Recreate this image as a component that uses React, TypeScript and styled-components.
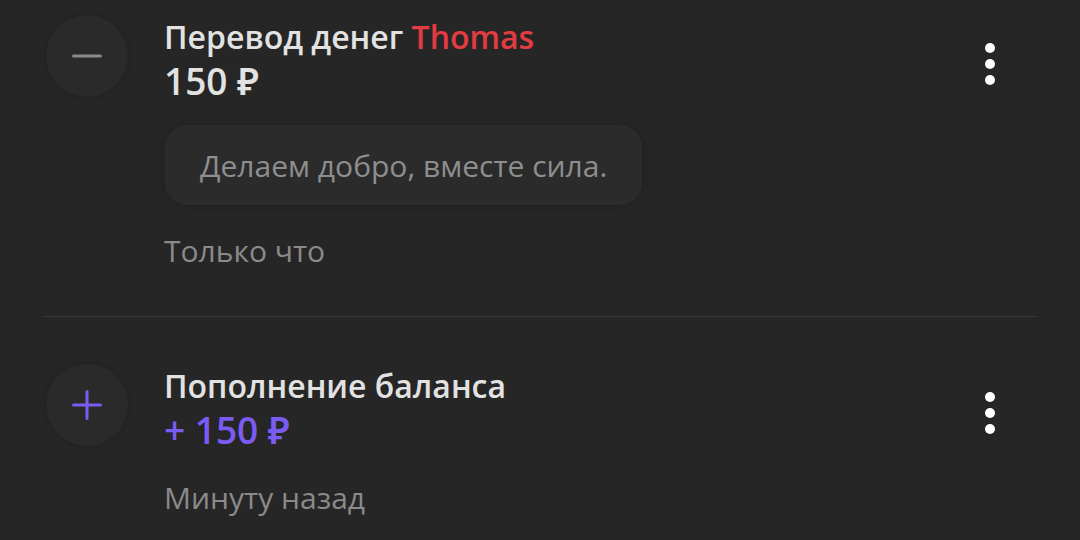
import styled, { createGlobalStyle } from 'styled-components';

const GlobalStyle = createGlobalStyle`
    html, body {
        margin: 0;
        background-color: #262626;
        font-family: "Open Sans", "Noto Sans", sans-serif;
        overflow: hidden;
    }
`;

const Feed = styled.div`
    width: 1080px;
    height: 540px;
    overflow: hidden;
`;

const List = styled.div`
    margin-top: -32px;
`;

const Item = styled.div<{ $last?: boolean }>`
    margin: 0 44px;
    padding: 47px 0 45px;
    border-bottom: ${(p) => (p.$last ? 'none' : '1px solid #383838')};
`;

const Head = styled.div`
    display: flex;
    align-items: flex-start;
`;

const IconCircle = styled.div`
    width: 82px;
    height: 82px;
    margin-left: 2px;
    border-radius: 50%;
    background-color: #2a2a2a;
    box-shadow: 0 0 6px rgba(0, 0, 0, 0.15);
    display: flex;
    align-items: center;
    justify-content: center;
    flex-shrink: 0;
`;

const Body = styled.div`
    flex: 1;
    margin-left: 36px;
`;

const Title = styled.div`
    font-size: 32px;
    font-weight: 600;
    line-height: 44px;
    color: #e2e2e2;
`;

const Name = styled.span`
    color: #e23b41;
`;

const Amount = styled.div<{ $income?: boolean }>`
    font-size: 37px;
    font-weight: 600;
    line-height: 44px;
    color: ${(p) => (p.$income ? '#7b5cf2' : '#e2e2e2')};
`;

const Menu = styled.button`
    background: none;
    border: none;
    padding: 0;
    margin: 28px 41px 0 0;
    display: flex;
    flex-direction: column;
    gap: 6px;
`;

const Dot = styled.span`
    width: 10px;
    height: 10px;
    border-radius: 50%;
    background-color: #ffffff;
`;

const Bubble = styled.div`
    display: inline-flex;
    align-items: center;
    height: 80px;
    margin: 22px 0 0 121px;
    padding: 0 35px;
    border-radius: 22px;
    background-color: #2b2b2b;
    box-shadow: 0 0 10px rgba(0, 0, 0, 0.18);
    font-size: 30px;
    color: #8e8e8e;
`;

const Time = styled.div`
    margin: 26px 0 0 120px;
    font-size: 30px;
    line-height: 40px;
    color: #8a8a8a;
`;

function Dots() {
    return (
        <Menu>
            <Dot />
            <Dot />
            <Dot />
        </Menu>
    );
}

function Minus() {
    return (
        <svg width="30" height="4" viewBox="0 0 30 4">
            <rect x="0" y="0.5" width="30" height="3" rx="1.5" fill="#8a8a8a" />
        </svg>
    );
}

function Plus() {
    return (
        <svg width="30" height="30" viewBox="0 0 30 30">
            <rect x="0" y="13.5" width="30" height="3" rx="1.5" fill="#7b5cf2" />
            <rect x="13.5" y="0" width="3" height="30" rx="1.5" fill="#7b5cf2" />
        </svg>
    );
}

export default function App() {
    return (
        <>
            <GlobalStyle />
            <Feed>
                <List>
                    <Item>
                        <Head>
                            <IconCircle>
                                <Minus />
                            </IconCircle>
                            <Body>
                                <Title>
                                    Перевод денег <Name>Thomas</Name>
                                </Title>
                                <Amount>150 ₽</Amount>
                            </Body>
                            <Dots />
                        </Head>
                        <Bubble>Делаем добро, вместе сила.</Bubble>
                        <Time>Только что</Time>
                    </Item>
                    <Item $last>
                        <Head>
                            <IconCircle>
                                <Plus />
                            </IconCircle>
                            <Body>
                                <Title>Пополнение баланса</Title>
                                <Amount $income>+ 150 ₽</Amount>
                            </Body>
                            <Dots />
                        </Head>
                        <Time>Минуту назад</Time>
                    </Item>
                </List>
            </Feed>
        </>
    );
}
